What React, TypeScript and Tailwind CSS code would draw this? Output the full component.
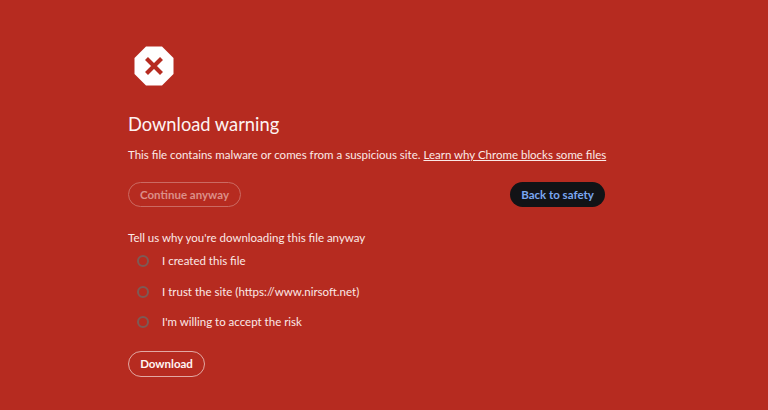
const reasons = ["I created this file", "I trust the site (https://www.nirsoft.net)", "I'm willing to accept the risk"];

export default function App() {
  return (
    <div className="h-[410px] w-[768px] overflow-hidden bg-[#b62b20] pl-[128px] pt-[46px] font-['Lato',sans-serif] text-[#fbe9e7]">
      <div className="w-[477px]">
        <svg width="40" height="40" viewBox="0 0 40 40" className="ml-[5.5px] block">
          <polygon points="12,0.5 28,0.5 39.5,12 39.5,28 28,39.5 12,39.5 0.5,28 0.5,12" fill="#ffffff" />
          <path d="M12.5 12.5 L27.5 27.5 M27.5 12.5 L12.5 27.5" stroke="#b62b20" strokeWidth="4.2" fill="none" />
        </svg>
        <h1 className="mt-[24px] text-[18.3px] leading-[28px] font-normal text-[#fdf3f2]">Download warning</h1>
        <p className="mt-[7px] whitespace-nowrap text-[11.5px] leading-[20px]">
          This file contains malware or comes from a suspicious site.{" "}
          <a className="underline">Learn why Chrome blocks some files</a>
        </p>
        <div className="mt-[17px] flex items-center justify-between">
          <button className="h-[25px] w-[113px] rounded-full border border-[#cb6a62] text-[11.5px] font-bold text-[#dc8f88]">
            Continue anyway
          </button>
          <button className="h-[25px] w-[95px] rounded-full bg-[#121316] text-[11.5px] font-bold text-[#7aa7f0]">
            Back to safety
          </button>
        </div>
        <p className="mt-[21px] text-[11.5px] leading-[20px]">Tell us why you're downloading this file anyway</p>
        <ul className="mt-[3px] flex flex-col gap-[10.5px]">
          {reasons.map((r) => (
            <li key={r} className="flex h-[20px] items-center pl-[8.5px] text-[11.5px]">
              <span className="mr-[13.5px] h-[12px] w-[12px] rounded-full border-2 border-[#7d5a55]" />
              {r}
            </li>
          ))}
        </ul>
        <button className="mt-[19px] h-[26px] w-[77px] rounded-full border border-[#e2a8a3] text-[11.5px] font-bold text-[#fff5f4]">
          Download
        </button>
      </div>
    </div>
  );
}
